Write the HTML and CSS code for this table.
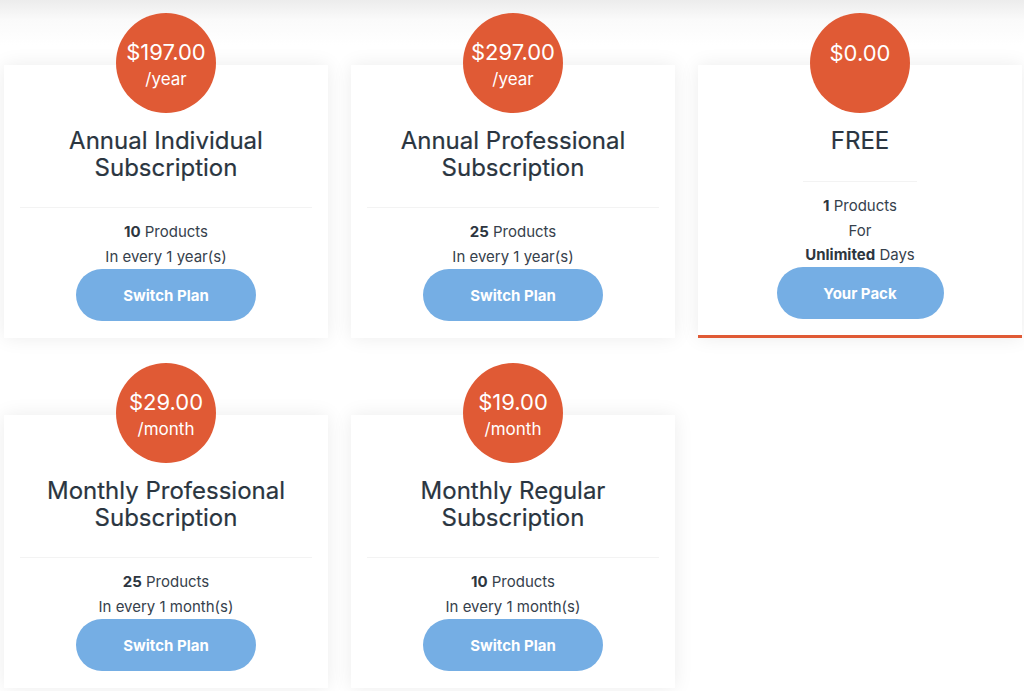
FILE: index.html
```html
<!DOCTYPE html>
<html lang="en">
<head>
  <meta charset="UTF-8">
  <title>Plans</title>
  <link rel="stylesheet" href="styles.css">
</head>
<body>

  <div class="plans">

    <div class="plan">
      <div class="price"><span class="amount">$197.00</span><span class="period">/year</span></div>
      <h2>Annual Individual Subscription</h2>
      <hr>
      <p><strong>10</strong> Products</p>
      <p>In every 1 year(s)</p>
      <button>Switch Plan</button>
    </div>

    <div class="plan">
      <div class="price"><span class="amount">$297.00</span><span class="period">/year</span></div>
      <h2>Annual Professional Subscription</h2>
      <hr>
      <p><strong>25</strong> Products</p>
      <p>In every 1 year(s)</p>
      <button>Switch Plan</button>
    </div>

    <div class="plan current">
      <div class="price"><span class="amount">$0.00</span></div>
      <h2>FREE</h2>
      <hr class="short">
      <p><strong>1</strong> Products</p>
      <p>For</p>
      <p><strong>Unlimited</strong> Days</p>
      <button>Your Pack</button>
    </div>

    <div class="plan">
      <div class="price"><span class="amount">$29.00</span><span class="period">/month</span></div>
      <h2>Monthly Professional Subscription</h2>
      <hr>
      <p><strong>25</strong> Products</p>
      <p>In every 1 month(s)</p>
      <button>Switch Plan</button>
    </div>

    <div class="plan">
      <div class="price"><span class="amount">$19.00</span><span class="period">/month</span></div>
      <h2>Monthly Regular Subscription</h2>
      <hr>
      <p><strong>10</strong> Products</p>
      <p>In every 1 month(s)</p>
      <button>Switch Plan</button>
    </div>

  </div>

</body>
</html>
```

FILE: styles.css
```css
body {
  margin: 0;
  font-family: Inter, 'Noto Sans', sans-serif;
  color: #36414c;
  background: linear-gradient(#ececec, #fafafa 20px, #ffffff 45px) no-repeat;
  min-height: 691px;
}

.plans {
  display: grid;
  grid-template-columns: repeat(3, 324px);
  column-gap: 23px;
  row-gap: 77px;
  padding: 65px 0 0 4px;
}

.plan {
  background: #ffffff;
  box-shadow: 0 0 18px rgba(0, 0, 0, 0.08);
  padding: 0 16px 17px;
  text-align: center;
  display: flex;
  flex-direction: column;
  align-items: center;
}

.plan.current {
  border-bottom: 3px solid #e05a35;
  padding-bottom: 16px;
}

.price {
  width: 100px;
  height: 100px;
  border-radius: 50%;
  background-color: #e05a35;
  color: white;
  margin: -52px auto 14px;
  display: flex;
  flex-direction: column;
  align-items: center;
  box-sizing: border-box;
  padding-top: 25px;
}

.current .price {
  padding-top: 26px;
}

.amount {
  font-size: 22px;
  font-weight: 400;
  line-height: 28px;
}

.period {
  font-size: 17px;
  line-height: 27px;
}

h2 {
  font-size: 24px;
  font-weight: 400;
  line-height: 27px;
  color: #2a3540;
  margin: 0;
  padding: 0 10px;
  -webkit-text-stroke: 0.2px #2a3540;
}

hr {
  align-self: stretch;
  border: none;
  border-top: 1px solid #f3f3f3;
  margin: 26px 0 11px;
}

hr.short {
  align-self: center;
  width: 114px;
  margin-top: 27px;
  margin-bottom: 12px;
}

p {
  margin: 0;
  font-size: 15px;
  line-height: 25px;
}

.current p {
  line-height: 24.7px;
}

strong {
  font-weight: 700;
  color: #2d3640;
}

button {
  width: 180px;
  height: 52px;
  border: none;
  border-radius: 26px;
  background-color: #75aee4;
  color: white;
  font-family: Inter, 'Noto Sans', sans-serif;
  font-size: 15px;
  font-weight: 700;
  cursor: pointer;
}

.current button {
  width: 167px;
  margin-top: -1px;
}
```
